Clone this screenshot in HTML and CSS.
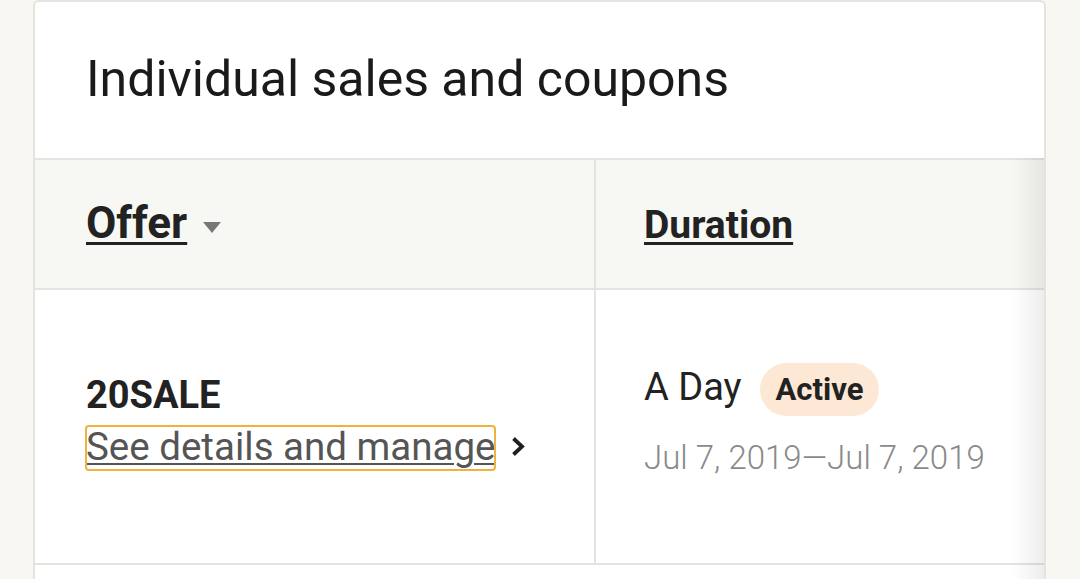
FILE: index.html
```html
<!doctype html>
<html>
<head>
<meta charset="UTF-8">
<title>Individual sales and coupons</title>
<link rel="stylesheet" href="styles.css">
</head>
<body>
<div class="card">
	<h2 class="title">Individual sales and coupons</h2>
	<div class="scroller">
		<table class="offers">
			<thead>
				<tr>
					<th class="col-offer"><a class="sort sort-on" href="javascript:;">Offer</a><span class="caret"></span></th>
					<th class="col-duration"><a class="sort" href="javascript:;">Duration</a></th>
				</tr>
			</thead>
			<tbody>
				<tr>
					<td class="col-offer">
						<div class="code">20SALE</div>
						<div class="manage"><a class="details" href="javascript:;">See details and manage</a><svg class="chev" width="14" height="21" viewBox="0 0 14 21"><polyline points="2.5,2.5 11,10.5 2.5,18.5" fill="none" stroke="#1f1f1f" stroke-width="3.8"/></svg></div>
					</td>
					<td class="col-duration">
						<div class="span-line"><span class="span-name">A Day</span><span class="badge">Active</span></div>
						<div class="dates">Jul 7, 2019—Jul 7, 2019</div>
					</td>
				</tr>
				<tr class="empty">
					<td></td>
					<td></td>
				</tr>
			</tbody>
		</table>
		<div class="shade"></div>
	</div>
</div>
</body>
</html>
```

FILE: styles.css
```css
*{ margin:0; padding:0; box-sizing:border-box; }
html,body{ height:100%; overflow:hidden; }
body{ background:#f8f7f2; font-family:Roboto, "Liberation Sans", sans-serif; color:#222; }
.card{ margin-left:33px; width:1013px; background:#fff; border:2px solid #e3e4df; border-bottom:none; border-radius:6px 6px 0 0; }
.title{ font-size:50px; font-weight:400; line-height:60px; padding:47px 50px 49px 51px; color:#1a1a1a; }
.scroller{ position:relative; }
.offers{ width:100%; border-collapse:collapse; table-layout:fixed; }
.offers th,.offers td{ border-top:2px solid #e3e4df; text-align:left; }
.offers .col-offer{ width:560px; padding-left:51px; border-right:2px solid #e3e4df; }
.offers .col-duration{ padding-left:48px; }
.offers th{ background:#f7f7f4; height:130px; vertical-align:baseline; font-size:39px; font-weight:700; line-height:50px; padding-top:38px; }
.sort{ color:#222; text-decoration:underline; text-decoration-thickness:3px; text-underline-offset:4px; }
.sort-on{ font-size:44px; }
.caret{ display:inline-block; margin-left:16px; border-left:9px solid transparent; border-right:9px solid transparent; border-top:11px solid #777; vertical-align:middle; }
.offers td{ height:275px; vertical-align:top; }
.offers td.col-offer{ padding-top:80px; }
.code{ font-size:38px; font-weight:700; line-height:51px; }
.manage{ font-size:38.5px; height:51px; display:flex; align-items:flex-start; }
.details{ margin-top:5px; line-height:41px; padding-bottom:3px; color:#555; text-decoration:underline; text-decoration-thickness:2px; text-underline-offset:3px; outline:2px solid #efb23f; outline-offset:-1px; border-radius:3px; }
.chev{ margin-left:16px; margin-top:15px; }
.offers td.col-duration{ padding-top:73px; }
.span-line{ display:flex; align-items:center; height:53px; }
.span-name{ font-size:38px; margin-bottom:6px; }
.badge{ margin-left:18px; height:53px; padding:0 16px; border-radius:27px; background:#fce8d5; font-size:31px; font-weight:700; line-height:53px; }
.dates{ margin-top:22px; font-size:33px; line-height:40px; color:#8a8a8a; font-weight:300; }
.offers tr.empty td{ height:80px; }
.shade{ position:absolute; top:0; right:0; bottom:0; width:32px; background:linear-gradient(to right, rgba(0,0,0,0), rgba(0,0,0,0.07)); pointer-events:none; }
```
